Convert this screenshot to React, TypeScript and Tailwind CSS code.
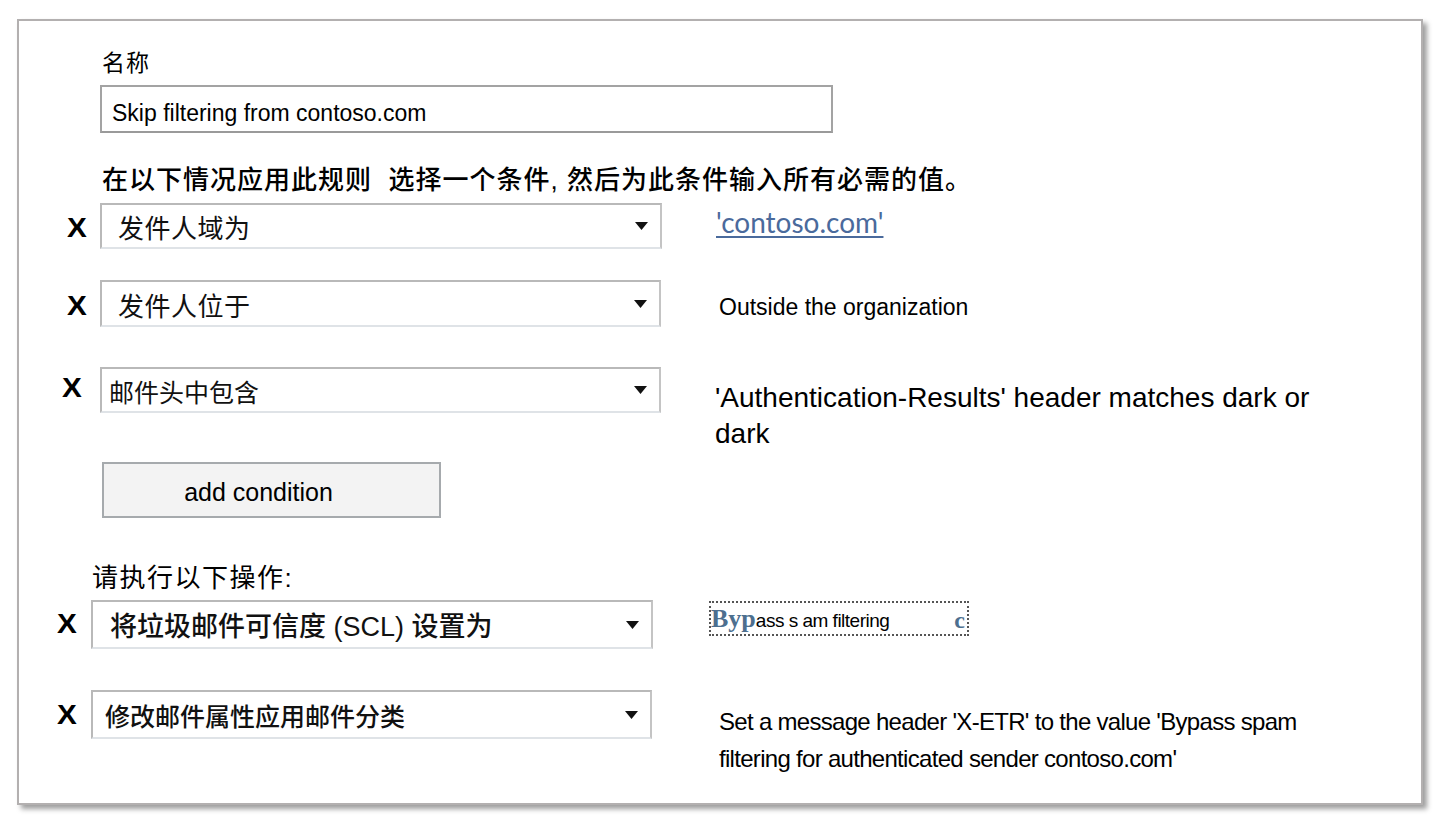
import type { ReactNode } from "react";

const sans = "font-['Liberation_Sans','Noto_Sans_CJK_SC',sans-serif]";

const Caret = () => (
  <svg width="13" height="8" viewBox="0 0 13 8" className="shrink-0">
    <path d="M0 0 H13 L6.5 8 Z" fill="#111" />
  </svg>
);

const RemoveMark = () => (
  <span className="block w-[22px] text-[27px] leading-none font-bold text-black scale-x-110 origin-left">
    X
  </span>
);

const Select = ({
  label,
  className = "",
  textClass = "pl-[16px]",
}: {
  label: string;
  className?: string;
  textClass?: string;
}) => (
  <div
    className={`shrink-0 flex items-center justify-between border-2 border-[#b9b9b9] border-b-[#dfe3e7] border-r-[#c4c4c4] bg-white pr-[12px] ${className}`}
  >
    <span className={`pt-[6px] leading-none text-[#111] ${textClass}`}>{label}</span>
    <Caret />
  </div>
);

const Row = ({
  markGap,
  markTop,
  select,
  aside,
  className = "",
}: {
  markGap: string;
  markTop: string;
  select: ReactNode;
  aside: ReactNode;
  className?: string;
}) => (
  <div className={`flex items-start ${className}`}>
    <div className={`${markGap} ${markTop}`}>
      <RemoveMark />
    </div>
    {select}
    {aside}
  </div>
);

export default function App() {
  return (
    <div className={`w-[1441px] h-[831px] bg-white pt-[19px] pl-[17px] ${sans}`}>
      <div className="w-[1406px] h-[786px] border-2 border-[#b3b0b0] bg-white shadow-[4px_4px_5px_rgba(0,0,0,0.38)] flex flex-col">
        <div className="mt-[30px] ml-[83px] text-[23px] leading-[24px] tracking-[1px] text-black">名称</div>
        <div className="mt-[10px] ml-[81px] w-[733px] h-[48px] border-2 border-[#a3a3a3] border-b-[#9a9a9a] flex items-center pl-[10px] pt-[8px] text-[23px] text-black">
          Skip filtering from contoso.com
        </div>

        <div className="mt-[33px] ml-[83px] text-[26px] leading-[28px] tracking-[1px] font-medium text-black">
          在以下情况应用此规则&nbsp;&nbsp;选择一个条件, 然后为此条件输入所有必需的值。
        </div>

        <div className="mt-[9px]">
          <Row
            markGap="ml-[48px] w-[33px]"
            markTop="mt-[12px]"
            select={
              <Select
                label="发件人域为"
                className="w-[562px] h-[46px] text-[26px] tracking-[0.5px]"
              />
            }
            aside={
              <span className="ml-[54px] mt-[3px] font-['Lato',sans-serif] text-[28px] leading-[32px] text-[#4a6a9c] underline underline-offset-[3px] decoration-[1.5px]">
                'contoso.com'
              </span>
            }
          />
        </div>

        <div className="mt-[31px]">
          <Row
            markGap="ml-[48px] w-[33px]"
            markTop="mt-[13px]"
            select={
              <Select
                label="发件人位于"
                className="w-[561px] h-[47px] text-[26px] tracking-[0.5px]"
              />
            }
            aside={
              <span className="ml-[58px] mt-[14px] text-[23px] leading-[26px] text-black">
                Outside the organization
              </span>
            }
          />
        </div>

        <div className="mt-[40px]">
          <Row
            className="h-[46px]"
            markGap="ml-[43px] w-[38px]"
            markTop="mt-[8px]"
            select={
              <Select
                label="邮件头中包含"
                className="w-[561px] h-[46px] text-[25px]"
                textClass="pl-[7px]"
              />
            }
            aside={
              <span className="ml-[54px] mt-[13px] w-[625px] text-[28px] leading-[36px] text-black">
                'Authentication-Results' header matches dark or dark
              </span>
            }
          />
        </div>

        <button className="mt-[49px] ml-[83px] w-[339px] h-[56px] border-2 border-[#a6aaad] bg-[#f3f3f3] text-[25px] text-black pr-[26px] pt-[6px]">
          add condition
        </button>

        <div className="mt-[46px] ml-[73px] text-[26px] leading-[28px] tracking-[1.5px] text-black">
          请执行以下操作:
        </div>

        <div className="mt-[8px]">
          <Row
            markGap="ml-[38px] w-[34px]"
            markTop="mt-[11px]"
            select={
              <Select
                label="将垃圾邮件可信度 (SCL) 设置为"
                className="w-[562px] h-[49px] text-[27px] font-medium"
                textClass="pl-[17px]"
              />
            }
            aside={
              <div className="ml-[56px] mt-[1px] w-[260px] h-[35px] border-2 border-dotted border-[#555] flex items-end justify-between pb-[2px] pr-[2px]">
                <span className="flex items-baseline">
                  <span className="font-['Liberation_Serif',serif] font-bold text-[26px] leading-none text-[#4d6f8f]">
                    Byp
                  </span>
                  <span className="text-[19px] leading-none tracking-[-0.5px] text-black">
                    ass s am filtering
                  </span>
                </span>
                <span className="font-['Liberation_Serif',serif] font-bold text-[24px] leading-none text-[#4d6f8f]">
                  c
                </span>
              </div>
            }
          />
        </div>

        <div className="mt-[41px]">
          <Row
            markGap="ml-[38px] w-[34px]"
            markTop="mt-[12px]"
            select={
              <Select
                label="修改邮件属性应用邮件分类"
                className="w-[561px] h-[49px] text-[25px] font-medium"
                textClass="pl-[12px]"
              />
            }
            aside={
              <div className="ml-[67px] mt-[13px] w-[600px] text-[24px] leading-[37px] tracking-[-0.7px] text-black">
                Set a message header 'X-ETR' to the value 'Bypass spam filtering for authenticated
                sender contoso.com'
              </div>
            }
          />
        </div>
      </div>
    </div>
  );
}
